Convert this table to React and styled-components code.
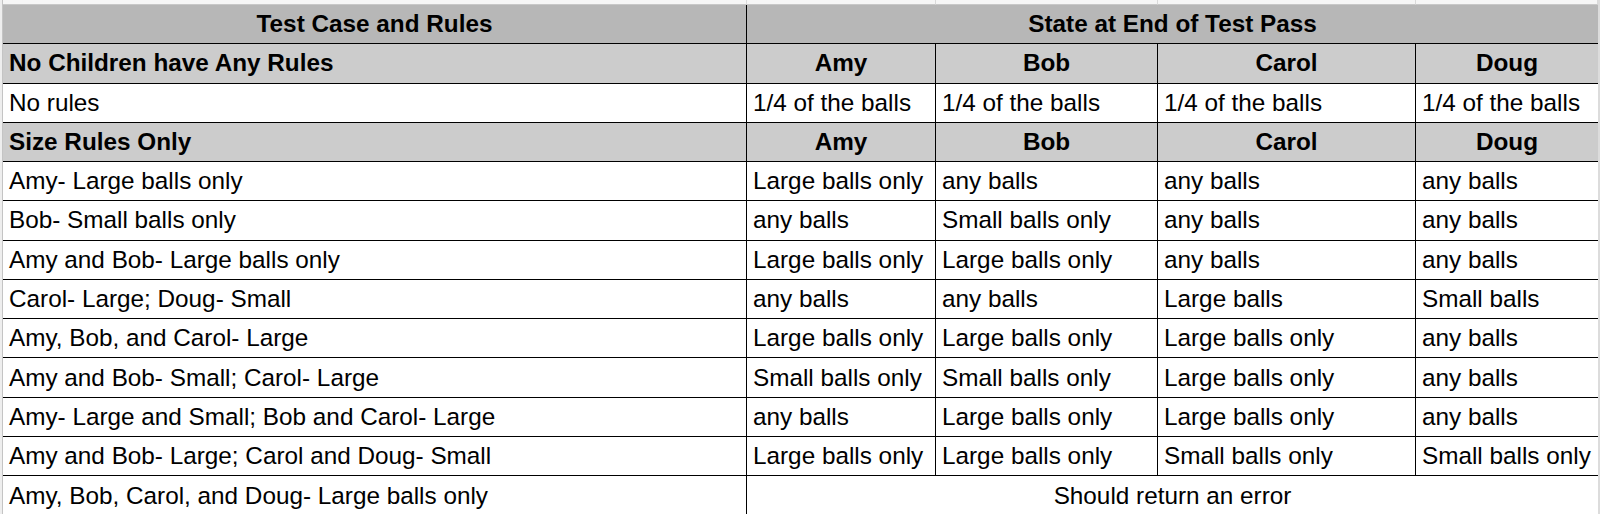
import React from 'react'
import styled, { createGlobalStyle } from 'styled-components'

const COLS = '3px 744px 189px 222px 258px 182px 2px'

const GlobalStyle = createGlobalStyle`
  html, body {
    margin: 0;
    padding: 0;
    background: #ffffff;
    overflow: hidden;
  }
  body {
    font-family: "Liberation Sans", Arial, sans-serif;
  }
`

const Sheet = styled.div`
  display: flex;
  flex-direction: column;
  width: 1600px;
  height: 514px;
  overflow: hidden;
  font-size: 24.3px;
  color: #000;
`

const tones = {
  head: '#b7b7b7',
  section: '#cccccc',
  plain: '#ffffff',
}

const Row = styled.div`
  display: grid;
  grid-template-columns: ${COLS};
  height: ${(p) => p.$h || 39.27}px;
  flex-shrink: 0;
  background: ${(p) => tones[p.$tone] || tones.plain};
`

const Gutter = styled.div`
  background: ${(p) => (p.$side === 'right' ? '#dcdcdc' : '#eeeeee')};
  border-right: ${(p) => (p.$side === 'right' ? 'none' : '1px solid #c4c4c4')};
`

const GridCell = styled.div`
  box-sizing: border-box;
  background: #f6f6f6;
  border-right: 1px solid #dadada;
  border-bottom: 1px solid #c8c8c8;
`

const Cell = styled.div`
  box-sizing: border-box;
  display: flex;
  align-items: center;
  justify-content: ${(p) => (p.$center ? 'center' : 'flex-start')};
  padding: 0 6px;
  grid-column: span ${(p) => p.$span || 1};
  font-weight: ${(p) => (p.$bold ? 700 : 400)};
  white-space: nowrap;
  overflow: hidden;
  border-right: ${(p) => (p.$edge ? 'none' : '1px solid #000')};
  border-bottom: ${(p) => (p.$open ? 'none' : '1px solid #000')};
`

const kids = ['Amy', 'Bob', 'Carol', 'Doug']

const sections = [
  {
    title: 'No Children have Any Rules',
    rows: [['No rules', '1/4 of the balls', '1/4 of the balls', '1/4 of the balls', '1/4 of the balls']],
  },
  {
    title: 'Size Rules Only',
    rows: [
      ['Amy- Large balls only', 'Large balls only', 'any balls', 'any balls', 'any balls'],
      ['Bob- Small balls only', 'any balls', 'Small balls only', 'any balls', 'any balls'],
      ['Amy and Bob- Large balls only', 'Large balls only', 'Large balls only', 'any balls', 'any balls'],
      ['Carol- Large; Doug- Small', 'any balls', 'any balls', 'Large balls', 'Small balls'],
      ['Amy, Bob, and Carol- Large', 'Large balls only', 'Large balls only', 'Large balls only', 'any balls'],
      ['Amy and Bob- Small; Carol- Large', 'Small balls only', 'Small balls only', 'Large balls only', 'any balls'],
      ['Amy- Large and Small; Bob and Carol- Large', 'any balls', 'Large balls only', 'Large balls only', 'any balls'],
      ['Amy and Bob- Large; Carol and Doug- Small', 'Large balls only', 'Large balls only', 'Small balls only', 'Small balls only'],
    ],
  },
]

const App = () => {
  return (
    <Sheet>
      <GlobalStyle />

      {/* sliver of the spreadsheet row above */}
      <Row $h={5}>
        <Gutter />
        <GridCell />
        <GridCell />
        <GridCell />
        <GridCell />
        <GridCell />
        <Gutter $side="right" />
      </Row>

      <Row $tone="head">
        <Gutter />
        <Cell $bold $center>Test Case and Rules</Cell>
        <Cell $bold $center $span={4} $edge>State at End of Test Pass</Cell>
        <Gutter $side="right" />
      </Row>

      {sections.map((sec) => (
        <React.Fragment key={sec.title}>
          <Row $tone="section">
            <Gutter />
            <Cell $bold>{sec.title}</Cell>
            {kids.map((k, i) => (
              <Cell key={k} $bold $center $edge={i === kids.length - 1}>{k}</Cell>
            ))}
            <Gutter $side="right" />
          </Row>
          {sec.rows.map((r) => (
            <Row key={r[0]}>
              <Gutter />
              {r.map((v, i) => (
                <Cell key={i} $edge={i === r.length - 1}>{v}</Cell>
              ))}
              <Gutter $side="right" />
            </Row>
          ))}
        </React.Fragment>
      ))}

      <Row>
        <Gutter />
        <Cell $open>Amy, Bob, Carol, and Doug- Large balls only</Cell>
        <Cell $open $center $span={4} $edge>Should return an error</Cell>
        <Gutter $side="right" />
      </Row>
    </Sheet>
  )
}

export default App
